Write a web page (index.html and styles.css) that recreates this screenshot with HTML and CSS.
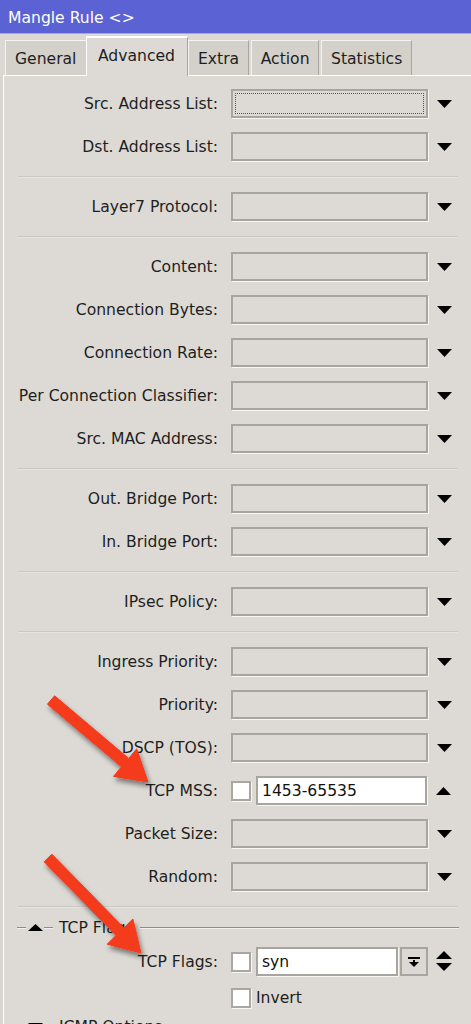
FILE: index.html
```html
<!DOCTYPE html>
<html>
<head>
<meta charset="utf-8">
<link rel="stylesheet" href="styles.css">
</head>
<body>
<div class="titlebar">Mangle Rule &lt;&gt;</div>
<div class="tabs">
  <div class="tab">General</div>
  <div class="tab active">Advanced</div>
  <div class="tab">Extra</div>
  <div class="tab">Action</div>
  <div class="tab">Statistics</div>
</div>
<div class="panel">
  <div class="row"><div class="label">Src. Address List:</div><div class="box focus"></div><div class="arrow"><svg width="15" height="8" viewBox="0 0 15 8"><polygon points="0,0 15,0 7.5,8" fill="#000"/></svg></div></div>
  <div class="row"><div class="label">Dst. Address List:</div><div class="box"></div><div class="arrow"><svg width="15" height="8" viewBox="0 0 15 8"><polygon points="0,0 15,0 7.5,8" fill="#000"/></svg></div></div>
  <div class="sep"></div>
  <div class="row"><div class="label">Layer7 Protocol:</div><div class="box"></div><div class="arrow"><svg width="15" height="8" viewBox="0 0 15 8"><polygon points="0,0 15,0 7.5,8" fill="#000"/></svg></div></div>
  <div class="sep"></div>
  <div class="row"><div class="label">Content:</div><div class="box"></div><div class="arrow"><svg width="15" height="8" viewBox="0 0 15 8"><polygon points="0,0 15,0 7.5,8" fill="#000"/></svg></div></div>
  <div class="row"><div class="label">Connection Bytes:</div><div class="box"></div><div class="arrow"><svg width="15" height="8" viewBox="0 0 15 8"><polygon points="0,0 15,0 7.5,8" fill="#000"/></svg></div></div>
  <div class="row"><div class="label">Connection Rate:</div><div class="box"></div><div class="arrow"><svg width="15" height="8" viewBox="0 0 15 8"><polygon points="0,0 15,0 7.5,8" fill="#000"/></svg></div></div>
  <div class="row"><div class="label">Per Connection Classifier:</div><div class="box"></div><div class="arrow"><svg width="15" height="8" viewBox="0 0 15 8"><polygon points="0,0 15,0 7.5,8" fill="#000"/></svg></div></div>
  <div class="row"><div class="label">Src. MAC Address:</div><div class="box"></div><div class="arrow"><svg width="15" height="8" viewBox="0 0 15 8"><polygon points="0,0 15,0 7.5,8" fill="#000"/></svg></div></div>
  <div class="sep"></div>
  <div class="row"><div class="label">Out. Bridge Port:</div><div class="box"></div><div class="arrow"><svg width="15" height="8" viewBox="0 0 15 8"><polygon points="0,0 15,0 7.5,8" fill="#000"/></svg></div></div>
  <div class="row"><div class="label">In. Bridge Port:</div><div class="box"></div><div class="arrow"><svg width="15" height="8" viewBox="0 0 15 8"><polygon points="0,0 15,0 7.5,8" fill="#000"/></svg></div></div>
  <div class="sep"></div>
  <div class="row"><div class="label">IPsec Policy:</div><div class="box"></div><div class="arrow"><svg width="15" height="8" viewBox="0 0 15 8"><polygon points="0,0 15,0 7.5,8" fill="#000"/></svg></div></div>
  <div class="sep"></div>
  <div class="row"><div class="label">Ingress Priority:</div><div class="box"></div><div class="arrow"><svg width="15" height="8" viewBox="0 0 15 8"><polygon points="0,0 15,0 7.5,8" fill="#000"/></svg></div></div>
  <div class="row"><div class="label">Priority:</div><div class="box"></div><div class="arrow"><svg width="15" height="8" viewBox="0 0 15 8"><polygon points="0,0 15,0 7.5,8" fill="#000"/></svg></div></div>
  <div class="row"><div class="label">DSCP (TOS):</div><div class="box"></div><div class="arrow"><svg width="15" height="8" viewBox="0 0 15 8"><polygon points="0,0 15,0 7.5,8" fill="#000"/></svg></div></div>
  <div class="row"><div class="label">TCP MSS:</div><div class="check"></div><div class="box white narrow"><span class="val">1453-65535</span></div><div class="arrow"><svg width="15" height="8" viewBox="0 0 15 8"><polygon points="0,8 15,8 7.5,0" fill="#000"/></svg></div></div>
  <div class="row"><div class="label">Packet Size:</div><div class="box"></div><div class="arrow"><svg width="15" height="8" viewBox="0 0 15 8"><polygon points="0,0 15,0 7.5,8" fill="#000"/></svg></div></div>
  <div class="row"><div class="label">Random:</div><div class="box"></div><div class="arrow"><svg width="15" height="8" viewBox="0 0 15 8"><polygon points="0,0 15,0 7.5,8" fill="#000"/></svg></div></div>
  <div class="sep"></div>
  <div class="section">
    <div class="sline short"></div>
    <svg class="stri" width="15" height="7" viewBox="0 0 15 7"><polygon points="0,7 15,7 7.5,0" fill="#000"/></svg>
    <div class="sline mid"></div>
    <div class="stitle">TCP Flags</div>
    <div class="sline grow"></div>
  </div>
  <div class="row"><div class="label">TCP Flags:</div><div class="check"></div><div class="box white flags"><span class="val">syn</span></div><div class="btn"><svg width="12" height="12" viewBox="0 0 12 12"><rect x="0" y="1" width="12" height="2" fill="#000"/><rect x="5" y="4" width="2" height="3" fill="#000"/><polygon points="1,6 11,6 6,11" fill="#000"/></svg></div><div class="arrow"><svg width="16" height="21" viewBox="0 0 16 21"><polygon points="0,8 16,8 8,0" fill="#000"/><polygon points="0,12 16,12 8,20" fill="#000"/></svg></div></div>
  <div class="row short"><div class="label"></div><div class="check"></div><div class="invert">Invert</div></div>
  <div class="section last">
    <div class="sline short"></div>
    <svg class="stri" width="15" height="7" viewBox="0 0 15 7"><polygon points="0,0 15,0 7.5,7" fill="#000"/></svg>
    <div class="sline mid"></div>
    <div class="stitle">ICMP Options</div>
    <div class="sline grow"></div>
  </div>
</div>
<svg class="overlay" width="471" height="1024" viewBox="0 0 471 1024">
  <defs>
    <filter id="sh" x="-20%" y="-20%" width="150%" height="150%">
      <feDropShadow dx="2" dy="4" stdDeviation="2.5" flood-color="#000" flood-opacity="0.45"/>
    </filter>
  </defs>
  <polygon filter="url(#sh)" fill="#f43a1c" stroke="#f43a1c" stroke-width="1" stroke-linejoin="round" points="54.6,695.8 128.7,758.4 136.7,748.8 148,782 113.5,776.4 121.5,766.8 47.4,704.2"/>
  <polygon filter="url(#sh)" fill="#f43a1c" stroke="#f43a1c" stroke-width="1" stroke-linejoin="round" points="51.9,854.2 123.9,927.8 132.9,919 141,953 107.1,944.2 116.1,935.4 44.1,861.8"/>
</svg>
</body>
</html>
```

FILE: styles.css
```css
html, body {
  margin: 0;
  padding: 0;
}
body {
  width: 471px;
  height: 1024px;
  overflow: hidden;
  position: relative;
  background: #d9d6d0;
  font-family: "DejaVu Sans", Verdana, sans-serif;
  font-size: 15.6px;
  color: #1e1e1e;
}
.titlebar {
  height: 33px;
  line-height: 36px;
  padding-left: 8px;
  background: #5b62d3;
  color: #ffffff;
  border-bottom: 1px solid #a4a7e4;
}
.tabs {
  display: flex;
  align-items: flex-end;
  height: 41px;
  padding-left: 5px;
  background: #dcd9d4;
  position: relative;
  z-index: 2;
}
.tab {
  height: 34px;
  line-height: 36px;
  padding: 0 8.5px 0 9px;
  margin-right: 2px;
  background: #d4d1cb;
  border-left: 1px solid #f4f3f0;
  border-top: 1px solid #f4f3f0;
  border-right: 1px solid #a9a6a1;
  box-sizing: content-box;
}
.tab.active {
  height: 38px;
  line-height: 36px;
  padding: 0 12px 0 11px;
  margin: 0 0 -1px -2px;
  background: #dddad5;
  border-top: 2px solid #ffffff;
  border-left: 1px solid #ffffff;
}
.tab:first-child { margin-right: 0; padding-right: 10.5px; }
.panel {
  margin-left: 3px;
  border-top: 1px solid #ffffff;
  border-left: 1px solid #ffffff;
  background: #dddad5;
  padding-top: 6px;
  height: 1000px;
}
.row {
  display: flex;
  align-items: center;
  height: 43px;
}
.row.short {
  height: 30px;
}
.label {
  width: 214px;
  text-align: right;
  margin-right: 13px;
  white-space: nowrap;
}
.box {
  width: 197px;
  height: 29px;
  box-sizing: border-box;
  border: 2px solid #a8a5a0;
  box-shadow: 1px 1px 0 #f7f6f3;
  background: #dddad5;
  display: flex;
  align-items: center;
}
.box.focus {
  outline: 1px dotted #505050;
  outline-offset: -5px;
}
.box.white {
  background: #ffffff;
}
.box.narrow {
  width: 171px;
}
.box.flags {
  width: 142px;
}
.val {
  padding-left: 4px;
  color: #111;
}
.check {
  width: 20px;
  height: 20px;
  box-sizing: border-box;
  border: 2px solid #aaa7a2;
  background: #ffffff;
  margin-right: 5px;
  box-shadow: 1px 1px 0 #f7f6f3;
}
.btn {
  width: 28px;
  height: 29px;
  box-sizing: border-box;
  margin-left: 2px;
  border: 2px solid #a8a5a0;
  background: #dcd9d4;
  display: flex;
  align-items: center;
  justify-content: center;
}
.arrow {
  margin-left: 8px;
  width: 16px;
  display: flex;
  align-items: center;
  justify-content: center;
}
.arrow svg, .btn svg, .stri {
  display: block;
}
.invert {
  color: #1e1e1e;
}
.sep {
  height: 17px;
  margin: 0 13px 0 14px;
  display: flex;
  align-items: center;
}
.sep::before {
  content: "";
  display: block;
  width: 100%;
  border-top: 1px solid #cbc8c2;
  border-bottom: 1px solid #e6e4e0;
}
.section {
  display: flex;
  align-items: center;
  height: 25px;
  padding-left: 13px;
  padding-right: 12px;
}
.section.last {
  margin-top: 1px;
}
.sline {
  border-top: 1px solid #8f8c88;
  border-bottom: 1px solid #f2f1ee;
}
.sline.short { width: 9px; margin-right: 2px; }
.sline.mid { width: 9px; margin-left: 1px; margin-right: 6px; }
.sline.grow { flex: 1; margin-left: 6px; }
.stitle {
  white-space: nowrap;
  color: #1e1e1e;
}
.overlay {
  position: absolute;
  left: 0;
  top: 0;
  pointer-events: none;
  z-index: 10;
}
```
